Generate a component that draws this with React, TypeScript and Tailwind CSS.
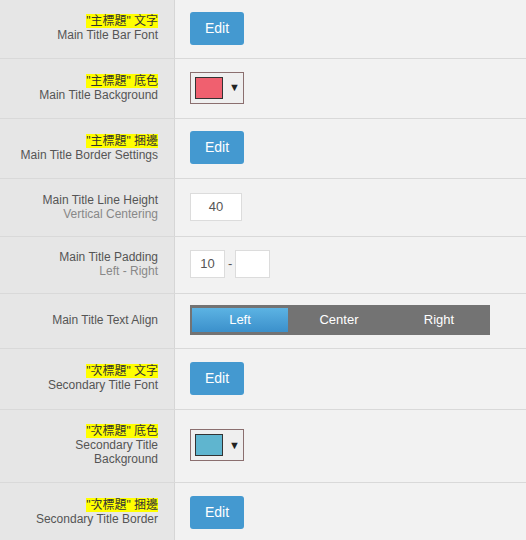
import React from "react";

const font = { fontFamily: '"Liberation Sans", Arial, "Noto Sans CJK TC", sans-serif' };

function Hl({ children }: { children: React.ReactNode }) {
  return <span className="bg-[#ffff00] text-[#333]">{children}</span>;
}

function EditBtn() {
  return (
    <button className="w-[54px] h-[33px] rounded-[3px] bg-[#4499d0] text-white text-[14px] flex items-center justify-center">
      Edit
    </button>
  );
}

function ColorPick({ color }: { color: string }) {
  return (
    <div className="w-[54px] h-[32px] border border-[#8b6f6f] bg-[#efefef] flex items-center pl-[4px]">
      <div className="w-[28px] h-[22px] border border-[#333]" style={{ background: color }} />
      <span className="ml-[6px] text-[11px] text-[#222] leading-none">▼</span>
    </div>
  );
}

function Row({
  h,
  left,
  right,
  last,
}: {
  h: number;
  left: React.ReactNode;
  right: React.ReactNode;
  last?: boolean;
}) {
  return (
    <div className={`flex ${last ? "" : "border-b border-[#d9d9d9]"}`} style={{ height: h }}>
      <div className="w-[175px] shrink-0 bg-[#e6e6e6] border-r border-[#d6d6d6] flex flex-col justify-center items-end pr-[16px] pb-[2px] text-right text-[12px] leading-[14px] text-[#555]">
        {left}
      </div>
      <div className="flex-1 bg-[#f2f2f2] flex items-center pl-[15px] pb-[2px]">{right}</div>
    </div>
  );
}

export default function App() {
  return (
    <div className="w-[526px] h-[540px] overflow-hidden bg-[#f2f2f2]" style={font}>
      <Row
        h={59}
        left={
          <>
            <div><Hl>"主標題" 文字</Hl></div>
            <div>Main Title Bar Font</div>
          </>
        }
        right={<EditBtn />}
      />
      <Row
        h={60}
        left={
          <>
            <div><Hl>"主標題" 底色</Hl></div>
            <div>Main Title Background</div>
          </>
        }
        right={<ColorPick color="#f0606f" />}
      />
      <Row
        h={60}
        left={
          <>
            <div><Hl>"主標題" 捆邊</Hl></div>
            <div>Main Title Border Settings</div>
          </>
        }
        right={<EditBtn />}
      />
      <Row
        h={58}
        left={
          <>
            <div>Main Title Line Height</div>
            <div className="text-[#888]">Vertical Centering</div>
          </>
        }
        right={
          <div className="w-[52px] h-[28px] bg-white border border-[#dcdcdc] flex items-center justify-center text-[13px] text-[#555]">
            40
          </div>
        }
      />
      <Row
        h={57}
        left={
          <>
            <div>Main Title Padding</div>
            <div className="text-[#888]">Left - Right</div>
          </>
        }
        right={
          <div className="flex items-center">
            <div className="w-[35px] h-[28px] bg-white border border-[#dcdcdc] flex items-center justify-center text-[13px] text-[#555]">
              10
            </div>
            <span className="mx-[3px] text-[13px] text-[#555]">-</span>
            <div className="w-[35px] h-[28px] bg-white border border-[#dcdcdc]" />
          </div>
        }
      />
      <Row
        h={55}
        left={<div>Main Title Text Align</div>}
        right={
          <div className="w-[300px] h-[30px] bg-[#737373] flex items-center px-[2px] text-[13px] text-white">
            <div className="w-[96px] h-[24px] bg-gradient-to-b from-[#5cb3e3] to-[#3b90cb] flex items-center justify-center">
              Left
            </div>
            <div className="w-[102px] text-center">Center</div>
            <div className="w-[98px] text-center">Right</div>
          </div>
        }
      />
      <Row
        h={61}
        left={
          <>
            <div><Hl>"次標題" 文字</Hl></div>
            <div>Secondary Title Font</div>
          </>
        }
        right={<EditBtn />}
      />
      <Row
        h={73}
        left={
          <>
            <div><Hl>"次標題" 底色</Hl></div>
            <div>Secondary Title</div>
            <div>Background</div>
          </>
        }
        right={<ColorPick color="#5fb5cf" />}
      />
      <Row
        h={60}
        last
        left={
          <>
            <div><Hl>"次標題" 捆邊</Hl></div>
            <div>Secondary Title Border</div>
          </>
        }
        right={<EditBtn />}
      />
    </div>
  );
}
